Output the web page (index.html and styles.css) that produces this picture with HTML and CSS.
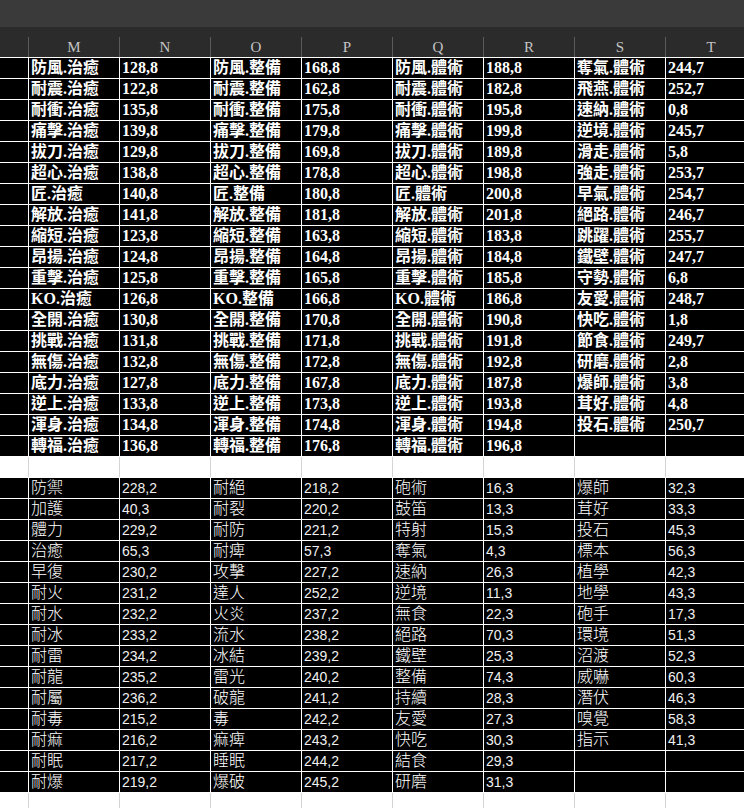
FILE: index.html
```html
<!DOCTYPE html>
<html lang="zh-Hant">
<head>
<meta charset="utf-8">
<title>Sheet</title>
<link rel="stylesheet" href="styles.css">
</head>
<body>
<div class="sheet">
  <div class="topbar"></div>
  <div class="hdr">
    <div class="hrow">
      <div class="hc corner"></div>
      <div class="hc">M</div><div class="hc">N</div><div class="hc">O</div><div class="hc">P</div>
      <div class="hc">Q</div><div class="hc">R</div><div class="hc">S</div><div class="hc">T</div>
    </div>
  </div>

  <div class="row dark b"><div class="c h"></div><div class="c">防風.治癒</div><div class="c">128,8</div><div class="c">防風.整備</div><div class="c">168,8</div><div class="c">防風.體術</div><div class="c">188,8</div><div class="c">奪氣.體術</div><div class="c">244,7</div></div>
  <div class="row dark b"><div class="c h"></div><div class="c">耐震.治癒</div><div class="c">122,8</div><div class="c">耐震.整備</div><div class="c">162,8</div><div class="c">耐震.體術</div><div class="c">182,8</div><div class="c">飛燕.體術</div><div class="c">252,7</div></div>
  <div class="row dark b"><div class="c h"></div><div class="c">耐衝.治癒</div><div class="c">135,8</div><div class="c">耐衝.整備</div><div class="c">175,8</div><div class="c">耐衝.體術</div><div class="c">195,8</div><div class="c">速納.體術</div><div class="c">0,8</div></div>
  <div class="row dark b"><div class="c h"></div><div class="c">痛擊.治癒</div><div class="c">139,8</div><div class="c">痛擊.整備</div><div class="c">179,8</div><div class="c">痛擊.體術</div><div class="c">199,8</div><div class="c">逆境.體術</div><div class="c">245,7</div></div>
  <div class="row dark b"><div class="c h"></div><div class="c">拔刀.治癒</div><div class="c">129,8</div><div class="c">拔刀.整備</div><div class="c">169,8</div><div class="c">拔刀.體術</div><div class="c">189,8</div><div class="c">滑走.體術</div><div class="c">5,8</div></div>
  <div class="row dark b"><div class="c h"></div><div class="c">超心.治癒</div><div class="c">138,8</div><div class="c">超心.整備</div><div class="c">178,8</div><div class="c">超心.體術</div><div class="c">198,8</div><div class="c">強走.體術</div><div class="c">253,7</div></div>
  <div class="row dark b"><div class="c h"></div><div class="c">匠.治癒</div><div class="c">140,8</div><div class="c">匠.整備</div><div class="c">180,8</div><div class="c">匠.體術</div><div class="c">200,8</div><div class="c">早氣.體術</div><div class="c">254,7</div></div>
  <div class="row dark b"><div class="c h"></div><div class="c">解放.治癒</div><div class="c">141,8</div><div class="c">解放.整備</div><div class="c">181,8</div><div class="c">解放.體術</div><div class="c">201,8</div><div class="c">絕路.體術</div><div class="c">246,7</div></div>
  <div class="row dark b"><div class="c h"></div><div class="c">縮短.治癒</div><div class="c">123,8</div><div class="c">縮短.整備</div><div class="c">163,8</div><div class="c">縮短.體術</div><div class="c">183,8</div><div class="c">跳躍.體術</div><div class="c">255,7</div></div>
  <div class="row dark b"><div class="c h"></div><div class="c">昂揚.治癒</div><div class="c">124,8</div><div class="c">昂揚.整備</div><div class="c">164,8</div><div class="c">昂揚.體術</div><div class="c">184,8</div><div class="c">鐵壁.體術</div><div class="c">247,7</div></div>
  <div class="row dark b"><div class="c h"></div><div class="c">重擊.治癒</div><div class="c">125,8</div><div class="c">重擊.整備</div><div class="c">165,8</div><div class="c">重擊.體術</div><div class="c">185,8</div><div class="c">守勢.體術</div><div class="c">6,8</div></div>
  <div class="row dark b"><div class="c h"></div><div class="c">KO.治癒</div><div class="c">126,8</div><div class="c">KO.整備</div><div class="c">166,8</div><div class="c">KO.體術</div><div class="c">186,8</div><div class="c">友愛.體術</div><div class="c">248,7</div></div>
  <div class="row dark b"><div class="c h"></div><div class="c">全開.治癒</div><div class="c">130,8</div><div class="c">全開.整備</div><div class="c">170,8</div><div class="c">全開.體術</div><div class="c">190,8</div><div class="c">快吃.體術</div><div class="c">1,8</div></div>
  <div class="row dark b"><div class="c h"></div><div class="c">挑戰.治癒</div><div class="c">131,8</div><div class="c">挑戰.整備</div><div class="c">171,8</div><div class="c">挑戰.體術</div><div class="c">191,8</div><div class="c">節食.體術</div><div class="c">249,7</div></div>
  <div class="row dark b"><div class="c h"></div><div class="c">無傷.治癒</div><div class="c">132,8</div><div class="c">無傷.整備</div><div class="c">172,8</div><div class="c">無傷.體術</div><div class="c">192,8</div><div class="c">研磨.體術</div><div class="c">2,8</div></div>
  <div class="row dark b"><div class="c h"></div><div class="c">底力.治癒</div><div class="c">127,8</div><div class="c">底力.整備</div><div class="c">167,8</div><div class="c">底力.體術</div><div class="c">187,8</div><div class="c">爆師.體術</div><div class="c">3,8</div></div>
  <div class="row dark b"><div class="c h"></div><div class="c">逆上.治癒</div><div class="c">133,8</div><div class="c">逆上.整備</div><div class="c">173,8</div><div class="c">逆上.體術</div><div class="c">193,8</div><div class="c">茸好.體術</div><div class="c">4,8</div></div>
  <div class="row dark b"><div class="c h"></div><div class="c">渾身.治癒</div><div class="c">134,8</div><div class="c">渾身.整備</div><div class="c">174,8</div><div class="c">渾身.體術</div><div class="c">194,8</div><div class="c">投石.體術</div><div class="c">250,7</div></div>
  <div class="row dark b"><div class="c h"></div><div class="c">轉福.治癒</div><div class="c">136,8</div><div class="c">轉福.整備</div><div class="c">176,8</div><div class="c">轉福.體術</div><div class="c">196,8</div><div class="c"></div><div class="c"></div></div>

  <div class="row light"><div class="c h"></div><div class="c"></div><div class="c"></div><div class="c"></div><div class="c"></div><div class="c"></div><div class="c"></div><div class="c"></div><div class="c"></div></div>

  <div class="row dark"><div class="c h"></div><div class="c">防禦</div><div class="c n">228,2</div><div class="c">耐絕</div><div class="c n">218,2</div><div class="c">砲術</div><div class="c n">16,3</div><div class="c">爆師</div><div class="c n">32,3</div></div>
  <div class="row dark"><div class="c h"></div><div class="c">加護</div><div class="c n">40,3</div><div class="c">耐裂</div><div class="c n">220,2</div><div class="c">鼓笛</div><div class="c n">13,3</div><div class="c">茸好</div><div class="c n">33,3</div></div>
  <div class="row dark"><div class="c h"></div><div class="c">體力</div><div class="c n">229,2</div><div class="c">耐防</div><div class="c n">221,2</div><div class="c">特射</div><div class="c n">15,3</div><div class="c">投石</div><div class="c n">45,3</div></div>
  <div class="row dark"><div class="c h"></div><div class="c">治癒</div><div class="c n">65,3</div><div class="c">耐痺</div><div class="c n">57,3</div><div class="c">奪氣</div><div class="c n">4,3</div><div class="c">標本</div><div class="c n">56,3</div></div>
  <div class="row dark"><div class="c h"></div><div class="c">早復</div><div class="c n">230,2</div><div class="c">攻擊</div><div class="c n">227,2</div><div class="c">速納</div><div class="c n">26,3</div><div class="c">植學</div><div class="c n">42,3</div></div>
  <div class="row dark"><div class="c h"></div><div class="c">耐火</div><div class="c n">231,2</div><div class="c">達人</div><div class="c n">252,2</div><div class="c">逆境</div><div class="c n">11,3</div><div class="c">地學</div><div class="c n">43,3</div></div>
  <div class="row dark"><div class="c h"></div><div class="c">耐水</div><div class="c n">232,2</div><div class="c">火炎</div><div class="c n">237,2</div><div class="c">無食</div><div class="c n">22,3</div><div class="c">砲手</div><div class="c n">17,3</div></div>
  <div class="row dark"><div class="c h"></div><div class="c">耐冰</div><div class="c n">233,2</div><div class="c">流水</div><div class="c n">238,2</div><div class="c">絕路</div><div class="c n">70,3</div><div class="c">環境</div><div class="c n">51,3</div></div>
  <div class="row dark"><div class="c h"></div><div class="c">耐雷</div><div class="c n">234,2</div><div class="c">冰結</div><div class="c n">239,2</div><div class="c">鐵壁</div><div class="c n">25,3</div><div class="c">沼渡</div><div class="c n">52,3</div></div>
  <div class="row dark"><div class="c h"></div><div class="c">耐龍</div><div class="c n">235,2</div><div class="c">雷光</div><div class="c n">240,2</div><div class="c">整備</div><div class="c n">74,3</div><div class="c">威嚇</div><div class="c n">60,3</div></div>
  <div class="row dark"><div class="c h"></div><div class="c">耐屬</div><div class="c n">236,2</div><div class="c">破龍</div><div class="c n">241,2</div><div class="c">持續</div><div class="c n">28,3</div><div class="c">潛伏</div><div class="c n">46,3</div></div>
  <div class="row dark"><div class="c h"></div><div class="c">耐毒</div><div class="c n">215,2</div><div class="c">毒</div><div class="c n">242,2</div><div class="c">友愛</div><div class="c n">27,3</div><div class="c">嗅覺</div><div class="c n">58,3</div></div>
  <div class="row dark"><div class="c h"></div><div class="c">耐痲</div><div class="c n">216,2</div><div class="c">痲痺</div><div class="c n">243,2</div><div class="c">快吃</div><div class="c n">30,3</div><div class="c">指示</div><div class="c n">41,3</div></div>
  <div class="row dark"><div class="c h"></div><div class="c">耐眠</div><div class="c n">217,2</div><div class="c">睡眠</div><div class="c n">244,2</div><div class="c">結食</div><div class="c n">29,3</div><div class="c"></div><div class="c"></div></div>
  <div class="row dark"><div class="c h"></div><div class="c">耐爆</div><div class="c n">219,2</div><div class="c">爆破</div><div class="c n">245,2</div><div class="c">研磨</div><div class="c n">31,3</div><div class="c"></div><div class="c"></div></div>

  <div class="row light tail"><div class="c h"></div><div class="c"></div><div class="c"></div><div class="c"></div><div class="c"></div><div class="c"></div><div class="c"></div><div class="c"></div><div class="c"></div></div>
</div>
</body>
</html>
```

FILE: styles.css
```css
html, body {
  margin: 0;
  padding: 0;
  background: #ffffff;
}
body {
  width: 744px;
  height: 808px;
  overflow: hidden;
}
.sheet {
  width: 744px;
  overflow: hidden;
}
.topbar {
  height: 27px;
  background: #3a3a3a;
}
.hdr {
  background: #2b2b2b;
  padding-top: 10px;
}
.hrow {
  display: flex;
  height: 20px;
}
.hc {
  flex: none;
  width: 91px;
  box-sizing: border-box;
  border-left: 1px solid #5a5a5a;
  text-align: center;
  color: #c4c4c4;
  font-family: "Liberation Serif", serif;
  font-size: 15px;
  line-height: 20px;
}
.hc.corner {
  width: 28px;
  border-left: none;
}
.row {
  display: flex;
  height: 21px;
  box-sizing: border-box;
  border-top: 1px solid #ffffff;
}
.c {
  flex: none;
  width: 91px;
  box-sizing: border-box;
  border-left: 1px solid #ffffff;
  padding-left: 2px;
  height: 20px;
  line-height: 20px;
  white-space: nowrap;
  overflow: hidden;
  font-size: 16px;
}
.c.h {
  width: 28px;
  border-left: none;
}
.dark {
  background: #000000;
  color: #ffffff;
}
.dark .c {
  font-family: "Liberation Sans", "Noto Sans CJK TC", sans-serif;
  font-weight: 300;
}
.dark .c.n {
  font-size: 14px;
  font-weight: 400;
  color: #f0f0f0;
}
.dark.b .c {
  font-family: "Liberation Serif", "Noto Sans CJK TC", serif;
  font-weight: 700;
  font-size: 16px;
}
.light {
  background: #ffffff;
}
.light .c {
  border-left-color: #d4d4d4;
}
.light .c.h {
  border-left: none;
}
.tail {
  height: 40px;
}
.tail .c {
  height: 40px;
}
```
